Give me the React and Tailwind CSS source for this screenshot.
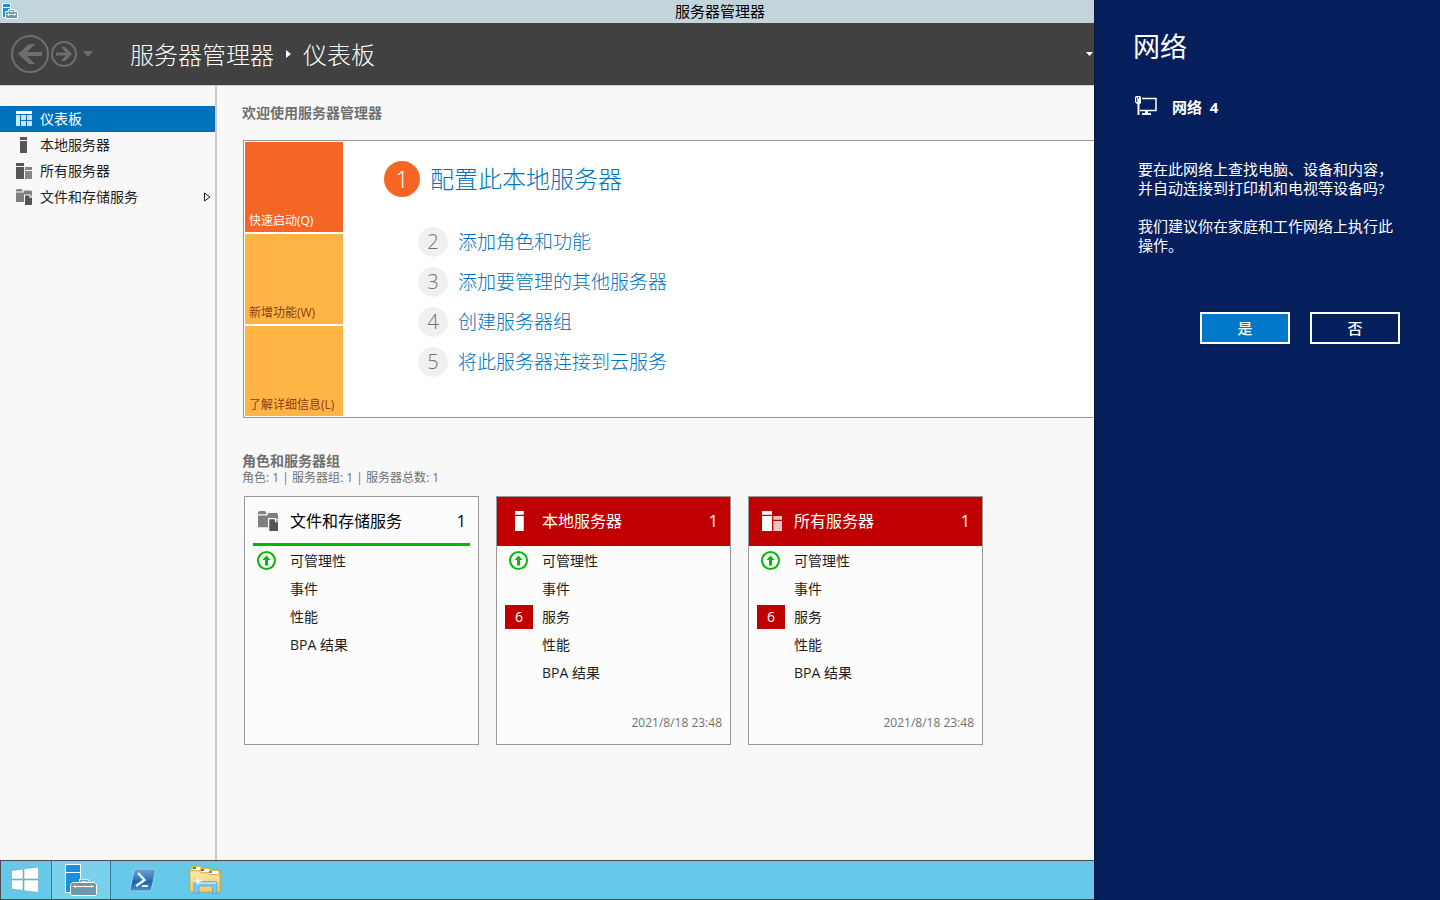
import React, { useState } from 'react';
import clsx from 'clsx';

const NAV_ITEMS = [
  { id: 'dashboard', label: '仪表板', icon: DashboardIcon },
  { id: 'local', label: '本地服务器', icon: ServerIcon },
  { id: 'all', label: '所有服务器', icon: ServersIcon },
  { id: 'storage', label: '文件和存储服务', icon: StorageIcon, hasChildren: true },
];

const QUICK_TABS = [
  { id: 'start', label: '快速启动(Q)' },
  { id: 'new', label: '新增功能(W)' },
  { id: 'more', label: '了解详细信息(L)' },
];

const STEPS = ['添加角色和功能', '添加要管理的其他服务器', '创建服务器组', '将此服务器连接到云服务'];

const CARDS = [
  {
    title: '文件和存储服务',
    count: 1,
    icon: StorageIcon,
    alert: false,
    rows: [{ label: '可管理性', ok: true }, { label: '事件' }, { label: '性能' }, { label: 'BPA 结果' }],
  },
  {
    title: '本地服务器',
    count: 1,
    icon: ServerIcon,
    alert: true,
    rows: [{ label: '可管理性', ok: true }, { label: '事件' }, { label: '服务', badge: 6 }, { label: '性能' }, { label: 'BPA 结果' }],
    updated: '2021/8/18 23:48',
  },
  {
    title: '所有服务器',
    count: 1,
    icon: ServersIcon,
    alert: true,
    rows: [{ label: '可管理性', ok: true }, { label: '事件' }, { label: '服务', badge: 6 }, { label: '性能' }, { label: 'BPA 结果' }],
    updated: '2021/8/18 23:48',
  },
];

function DashboardIcon({ className }) {
  return (
    <svg viewBox="0 0 16 16" className={className} shapeRendering="crispEdges" aria-hidden="true">
      <path fill="#fff" d="M0 0h16v3H0z" />
      <path fill="#cce3f4" d="M0 4h4v11H0zM5 4h5v5H5zM11 4h5v5h-5zM5 10h5v5H5zM11 10h5v5h-5z" />
    </svg>
  );
}

function ServerIcon({ className, light }) {
  return (
    <svg viewBox="0 0 16 16" className={className} aria-hidden="true">
      <path fill={light ? '#fff' : '#555'} d="M4 0h7v3H4zM4 4h7v12H4z" />
    </svg>
  );
}

function ServersIcon({ className, light }) {
  return (
    <svg viewBox="0 0 16 16" className={className} aria-hidden="true">
      <path fill={light ? '#fff' : '#555'} d="M0 0h8v3H0zM0 4h8v12H0z" />
      <path fill={light ? '#f0bfbf' : '#858585'} d="M9 4h7v3H9zM9 8h7v8H9z" />
    </svg>
  );
}

function StorageIcon({ className }) {
  return (
    <svg viewBox="0 0 16 16" className={className} aria-hidden="true">
      <path fill="#808080" d="M0 1l1-1h4.500l1 1v1.500H0zM0 3.500h7.500V2.500l1-1H15l1 1V7l-2-1.500H8V13H0z" />
      <path fill="#555" d="M9 6.500h4.500V9H16v7H9z" />
      <path fill="#808080" d="M14.500 6.500L16 8v.5h-1.500z" />
    </svg>
  );
}

function OkIcon() {
  return (
    <svg viewBox="0 0 20 20" className="size-5" aria-hidden="true">
      <circle cx="9.500" cy="9.500" r="8.500" fill="none" stroke="#00ba00" strokeWidth="2" />
      <path fill="#00ba00" d="M9.500 4.500l4 4.500h-2.500v5.500H8V9H5.500z" />
    </svg>
  );
}

function ServerManagerIcon({ className }) {
  return (
    <svg viewBox="0 0 32 32" className={className} aria-hidden="true">
      <path fill="#1e8ede" stroke="#fff" d="M.5.5h15v28H.5z" />
      <path stroke="#fff" d="M.5 8.500h15" />
      <path fill="none" stroke="#fff" strokeWidth="3" d="M15.500 19v-2.500h6.500V19" />
      <path fill="none" stroke="#7496ab" strokeWidth="1.500" d="M15.500 19v-2.500h6.500V19" />
      <path fill="#7496ab" stroke="#fff" d="M7.500 18.500h22l2 2v10l-1 1h-24l-1-1v-10z" />
      <path stroke="#fff" d="M8 22.500h21" />
      <path fill="#fff" d="M10 21l2 1.500-2 1.500zM27 21l-2 1.500 2 1.500z" />
    </svg>
  );
}

// simplified drawing with heavier lines for the title bar
function SmallManagerIcon() {
  return (
    <svg viewBox="0 0 16 16" className="size-4" aria-hidden="true">
      <path fill="#1e8ede" stroke="#fff" d="M.5.500h8v14h-8z" />
      <path stroke="#fff" d="M0 4.500h9" />
      <path fill="none" stroke="#fff" strokeWidth="3" d="M7.500 9V7.500h4V9" />
      <path fill="#7496ab" stroke="#fff" d="M3.500 8.500h12v7h-12z" />
      <path fill="none" stroke="#7496ab" d="M7.500 9V7.500h4V9" />
      <path stroke="#fff" d="M5 11.500h9M6.500 10v3M12.500 10v3" strokeWidth=".8" />
    </svg>
  );
}

function NetworkIcon() {
  return (
    <svg viewBox="0 0 22 20" className="h-5 w-[22px]" aria-hidden="true">
      <path fill="none" stroke="#fff" strokeWidth="1.500" d="M7 2.500h14v12H5" />
      <path fill="#fff" d="M10 15h3v2h3v2H7v-2h3z" />
      <path fill="#fff" d="M1 0h4l1 1v6L4.500 8.500V19h-2V8.500L0 6V1z" />
      <path fill="#051e5c" d="M1.200 1.500h1V6h-1zM3 1h1v1.500H3z" />
    </svg>
  );
}

function TitleBar() {
  return (
    <header className="flex h-[23px] items-center bg-[#c3d5dc] px-0.5 pb-0.5 text-black">
      <SmallManagerIcon />
      <h1 className="flex-1 pr-4 text-center text-[15px] leading-5">服务器管理器</h1>
    </header>
  );
}

function CommandBar() {
  return (
    <div className="flex h-[63px] items-center border-b border-[#d0d0d0] bg-[#414141] pr-[347px] pl-[11px] text-white">
      <button type="button" aria-label="后退">
        <svg viewBox="0 0 38 38" className="size-[38px]" fill="none" stroke="#6e6e6e">
          <circle cx="19" cy="19" r="18" strokeWidth="2" />
          <path d="M31 19H10" strokeWidth="4" />
          <path fill="#6e6e6e" stroke="none" d="M7 19L18 9h6L14 19l10 10h-6z" />
        </svg>
      </button>
      <button type="button" className="ml-0.5" aria-label="前进">
        <svg viewBox="0 0 26 26" className="size-[26px]" fill="none" stroke="#6e6e6e">
          <circle cx="13" cy="13" r="12" strokeWidth="2" />
          <path d="M5 13h14" strokeWidth="3" />
          <path fill="#6e6e6e" stroke="none" d="M21 13l-7-7h-4l6.500 7-6.500 7h4z" />
        </svg>
      </button>
      <button type="button" className="ml-1.5" aria-label="历史记录">
        <svg viewBox="0 0 10 6" className="h-1.5 w-2.5">
          <path fill="#6e6e6e" d="M0 0h10L5 6z" />
        </svg>
      </button>
      <nav aria-label="路径" className="ml-[37px] flex items-center pt-0.5 text-2xl font-light">
        <a href="#home">服务器管理器</a>
        <svg viewBox="0 0 5 8" className="mx-3 mb-0.5 h-2 w-[5px]" aria-hidden="true">
          <path fill="#fff" d="M0 0l5 4-5 4z" />
        </svg>
        <a href="#dashboard">仪表板</a>
      </nav>
      <button type="button" className="ml-auto" aria-label="更多">
        <svg viewBox="0 0 7 4" className="h-1 w-[7px]">
          <path fill="#fff" d="M0 0h7L3.500 4z" />
        </svg>
      </button>
    </div>
  );
}

function Sidebar({ active, onSelect }) {
  return (
    <nav className="w-[217px] shrink-0 border-r-2 border-[#ccc] pt-5">
      <ul>
        {NAV_ITEMS.map(({ id, label, icon: Icon, hasChildren }) => (
          <li key={id}>
            <button
              type="button"
              onClick={() => onSelect(id)}
              className={clsx(
                'flex h-[26px] w-full items-center gap-2 pr-1 pl-4 text-sm',
                active === id ? 'bg-[#0072bc] text-white' : 'text-[#1e1e1e]'
              )}
            >
              <Icon className="size-4" />
              <span>{label}</span>
              {hasChildren && (
                <svg viewBox="0 0 7 10" className="ml-auto h-2.5 w-[7px]" aria-hidden="true">
                  <path fill="none" stroke="#1e1e1e" d="M.5 1v8L6 5z" />
                </svg>
              )}
            </button>
          </li>
        ))}
      </ul>
    </nav>
  );
}

function Welcome() {
  const [tab, setTab] = useState('start');

  return (
    <section>
      <h2 className="-ml-px text-sm font-bold text-[#707070]">欢迎使用服务器管理器</h2>
      <div className="mt-[17px] flex border border-[#999] bg-white p-px">
        <div className="flex w-[98px] shrink-0 flex-col gap-0.5">
          {QUICK_TABS.map(({ id, label }) => (
            <button
              key={id}
              type="button"
              onClick={() => setTab(id)}
              className={clsx(
                'flex h-[90px] items-end px-1 pb-[3px] text-xs whitespace-nowrap',
                tab === id ? 'bg-[#f56523] text-white' : 'bg-[#ffb445] text-[#8a4010]'
              )}
            >
              {label}
            </button>
          ))}
        </div>
        <div className="pt-[19px] pl-[41px] font-light">
          <a href="#configure" className="flex items-center gap-2.5 text-2xl leading-9 text-[#0072bc]">
            <span className="flex size-9 items-center justify-center rounded-full bg-[#f56523] text-white">1</span>
            配置此本地服务器
          </a>
          <ol className="mt-[30px] ml-[34px] space-y-2.5">
            {STEPS.map((step, i) => (
              <li key={step}>
                <a href={`#step-${i + 2}`} className="flex items-center gap-2.5 text-[19px] leading-[30px] text-[#0072bc]">
                  <span className="flex size-[30px] items-center justify-center rounded-full bg-[#f0f0f0] text-xl text-[#707070]">
                    {i + 2}
                  </span>
                  {step}
                </a>
              </li>
            ))}
          </ol>
        </div>
      </div>
    </section>
  );
}

function RoleCard({ title, count, icon: Icon, alert, rows, updated }) {
  return (
    <article className="flex min-h-[249px] w-[235px] flex-col border border-[#999] bg-[#fcfcfc] pb-[9px]">
      <header
        className={clsx(
          'flex h-[49px] items-center text-base',
          alert ? 'bg-[#c00000] px-2 pb-px text-white' : 'mx-2 border-b-3 border-[#00ba00] pt-0.5 text-black'
        )}
      >
        <span className="flex w-[29px] justify-center">
          <Icon className="size-5" light={alert} />
        </span>
        <h3 className="ml-2">{title}</h3>
        <span className="mr-1 ml-auto">{count}</span>
      </header>
      <ul className="pt-px text-sm text-[#1e1e1e]">
        {rows.map(({ label, ok, badge }) => (
          <li key={label} className="flex h-7 items-center pl-2">
            <span className="flex w-7 justify-center">
              {ok && <OkIcon />}
              {badge && (
                <span className="flex h-6 w-7 items-center justify-center bg-[#c00000] text-white">{badge}</span>
              )}
            </span>
            <a href="#details" className="ml-[9px]">{label}</a>
          </li>
        ))}
      </ul>
      {updated && <time className="mt-auto mr-2 text-right text-xs leading-6 text-[#707070]">{updated}</time>}
    </article>
  );
}

function Roles() {
  return (
    <section className="mt-[34px]">
      <h2 className="-ml-px text-sm leading-[18px] font-bold text-[#707070]">角色和服务器组</h2>
      <p className="-ml-px text-xs text-[#707070]">角色: 1 | 服务器组: 1 | 服务器总数: 1</p>
      <div className="mt-2.5 ml-px flex flex-wrap gap-[17px]">
        {CARDS.map((card) => (
          <RoleCard key={card.title} {...card} />
        ))}
      </div>
    </section>
  );
}

function Taskbar() {
  return (
    <footer className="flex h-10 border border-[#4c4c4c] bg-[#66c9ea]">
      <button type="button" className="flex w-[50px] items-center justify-center pr-0.5" aria-label="开始">
        <svg viewBox="0 0 28 28" className="size-7">
          <path
            fill="#fff"
            stroke="#4a9fbd"
            strokeWidth=".5"
            d="M.5 4.500L12 3v10H.5zM13 2.800L27.500 1v12H13zM.5 14H12v10.500L.5 23zM13 14h14.500v12.500L13 24.700z"
          />
        </svg>
      </button>
      <button
        type="button"
        className="flex w-[60px] items-center justify-center border-x border-[#3d7b92] bg-[#7ad1ed]"
        aria-label="服务器管理器"
      >
        <ServerManagerIcon className="size-8" />
      </button>
      <button type="button" className="flex w-16 items-center justify-center" aria-label="Windows PowerShell">
        <svg viewBox="0 0 28 24" className="h-6 w-7">
          <defs>
            <linearGradient id="ps" x1="0" y1="0" x2="0" y2="1">
              <stop offset="0" stopColor="#6aa5d6" />
              <stop offset=".5" stopColor="#2f74b8" />
              <stop offset=".55" stopColor="#1f5fa8" />
              <stop offset="1" stopColor="#4593cf" />
            </linearGradient>
          </defs>
          <path fill="url(#ps)" stroke="#9fd0ec" d="M7 1h18q2 0 1.500 2l-4 18q-.5 2-2.500 2H2.500Q.5 23 1 21L5 3q.5-2 2-2z" />
          <path fill="none" stroke="#e8f4fc" strokeWidth="2.500" d="M9 5l6.500 7L7 18" />
          <path stroke="#e8f4fc" strokeWidth="2" d="M13 18h6" />
        </svg>
      </button>
      <button type="button" className="flex w-[60px] items-center justify-center" aria-label="文件资源管理器">
        <svg viewBox="0 0 32 30" className="h-[30px] w-8">
          <defs>
            <linearGradient id="folder" x1="0" y1="0" x2="0" y2="1">
              <stop offset="0" stopColor="#fbeaa8" />
              <stop offset="1" stopColor="#ecc968" />
            </linearGradient>
          </defs>
          <path fill="#e6c46a" stroke="#b8923c" strokeWidth=".6" d="M1 27V3l2-2h9l2 2h7l2 2h7l1.500 2v20z" />
          <path fill="#fff" d="M4 2h7v3H4zM12 4h8v3h-8zM20 6h9v3h-9z" />
          <path fill="#12a84a" d="M4 2h3v2H4z" />
          <path fill="#d8402c" d="M12 4h3v2h-3z" />
          <path fill="#2e9be6" d="M20 6h3v2h-3z" />
          <path fill="url(#folder)" stroke="#c9a54a" strokeWidth=".5" d="M1 6h9l2 2h7l1.500 2H31v17H1z" />
          <path fill="#7cc8ea" stroke="#4a9cc4" strokeWidth=".6" d="M5 28.500V18q0-1.500 1.500-1.500h20Q28 16.500 28 18v10.500h-4.500V21H10v7.500z" />
          <path stroke="#e4f6fd" d="M6 18h21" />
          <path fill="#fff" d="M9 11l.8 4 4.200 1-4.200 1-.8 4-.8-4-4.200-1 4.200-1z" />
        </svg>
      </button>
    </footer>
  );
}

function NetworkPanel() {
  return (
    <aside className="fixed inset-y-0 right-0 w-[346px] border-l border-[#031640] bg-[#051e5c] pr-10 pl-[38px] text-[15px] text-white">
      <h2 className="pt-[29px] text-[27px] leading-9">网络</h2>
      <div className="mt-7 ml-0.5 flex items-center gap-[15px]">
        <NetworkIcon />
        <h3 className="pt-0.5 leading-6 font-bold whitespace-pre">网络  4</h3>
      </div>
      <div className="mt-[41px] ml-[5px] space-y-[19px] leading-[19px]">
        <p>要在此网络上查找电脑、设备和内容，并自动连接到打印机和电视等设备吗?</p>
        <p>我们建议你在家庭和工作网络上执行此操作。</p>
      </div>
      <div className="mt-[57px] flex justify-end gap-5 font-medium">
        <button type="button" className="h-8 w-[90px] border-2 border-white bg-[#0078ca]">是</button>
        <button type="button" className="h-8 w-[90px] border-2 border-white">否</button>
      </div>
    </aside>
  );
}

function App() {
  const [active, setActive] = useState('dashboard');

  return (
    <div className="flex min-h-screen flex-col bg-[#f8f8f8] font-['Open_Sans','Noto_Sans_CJK_SC',sans-serif]">
      <TitleBar />
      <CommandBar />
      <div className="flex flex-1">
        <Sidebar active={active} onSelect={setActive} />
        <main className="min-w-0 flex-1 pt-[17px] pb-8 pl-[26px]">
          <Welcome />
          <Roles />
        </main>
      </div>
      <Taskbar />
      <NetworkPanel />
    </div>
  );
}

export default App;
